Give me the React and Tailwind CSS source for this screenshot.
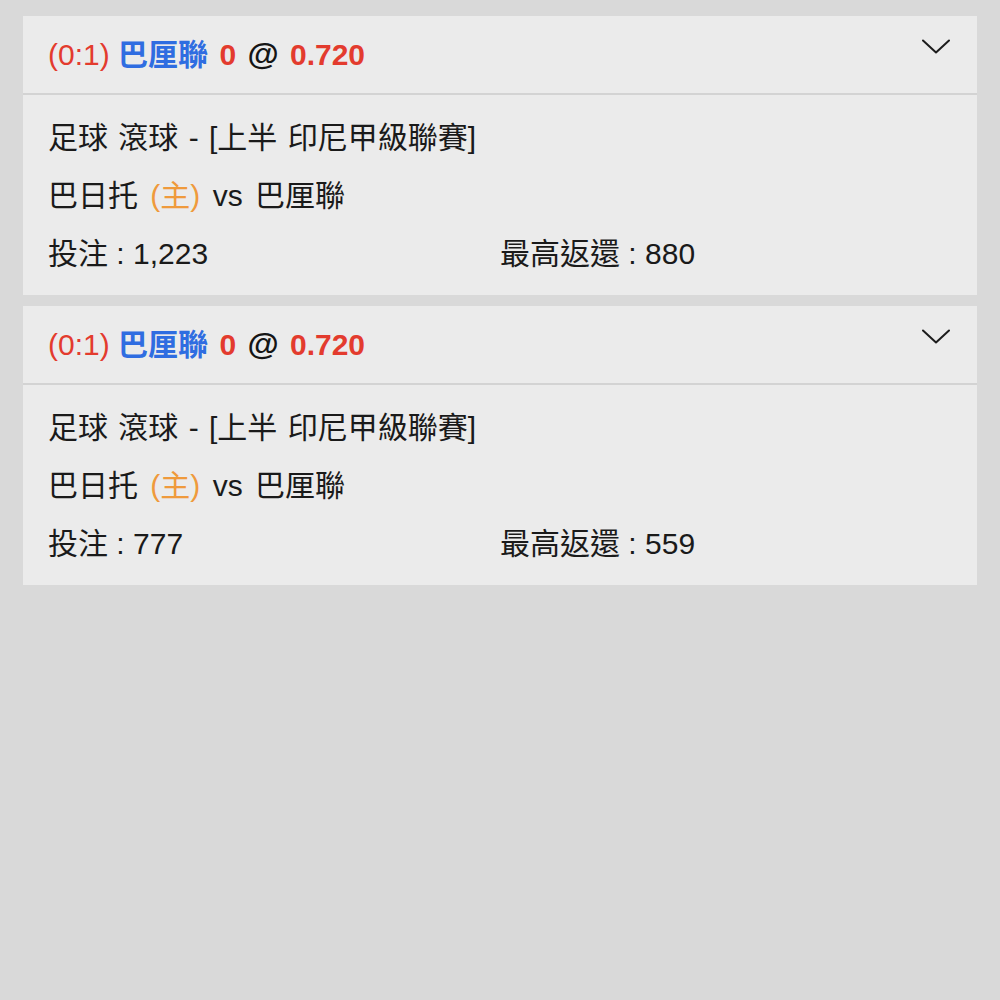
const bets = [
  { stake: '1,223', maxReturn: '880' },
  { stake: '777', maxReturn: '559' },
];

function Chevron() {
  return (
    <svg width="28" height="15" viewBox="0 0 28 15" fill="none" className="mt-[23px] mr-[27px] shrink-0">
      <polyline points="1,1.5 14,13.5 27,1.5" stroke="#1c1c1c" strokeWidth="2" strokeLinecap="round" strokeLinejoin="round" />
    </svg>
  );
}

function BetCard({ bet }) {
  return (
    <div className="bg-[#ebebeb]">
      <div className="flex items-start justify-between h-[79px] border-b-2 border-[#d3d3d3]">
        <div className="pl-[25px] leading-[77px] text-[30px] whitespace-nowrap">
          <span className="text-[#e33b2e]">(0:1)</span>{' '}
          <span className="[word-spacing:3px]">
            <span className="text-[#2f6de1] font-bold">巴厘聯</span>{' '}
            <span className="text-[#e33b2e] font-bold">0</span>{' '}
            <span className="text-[#151515] font-bold text-[32px]">@</span>{' '}
            <span className="text-[#e33b2e] font-bold">0.720</span>
          </span>
        </div>
        <Chevron />
      </div>
      <div className="px-[25px] pt-[14px] pb-[12px] text-[30px] leading-[58px] text-[#1a1a1a]">
        <div className="[word-spacing:2px]">足球 滾球 - [上半 印尼甲級聯賽]</div>
        <div className="[word-spacing:4px]">
          巴日托 <span className="text-[#ef9a3c]">(主)</span> vs 巴厘聯
        </div>
        <div className="grid grid-cols-2">
          <div>投注 : {bet.stake}</div>
          <div>最高返還 : {bet.maxReturn}</div>
        </div>
      </div>
    </div>
  );
}

export default function App() {
  return (
    <div
      className="min-h-[1000px] bg-[#d9d9d9] px-[23px] pt-[16px] flex flex-col gap-[11px]"
      style={{ fontFamily: '"Liberation Sans", "Noto Sans CJK TC", sans-serif' }}
    >
      {bets.map((bet, i) => (
        <BetCard key={i} bet={bet} />
      ))}
    </div>
  );
}
